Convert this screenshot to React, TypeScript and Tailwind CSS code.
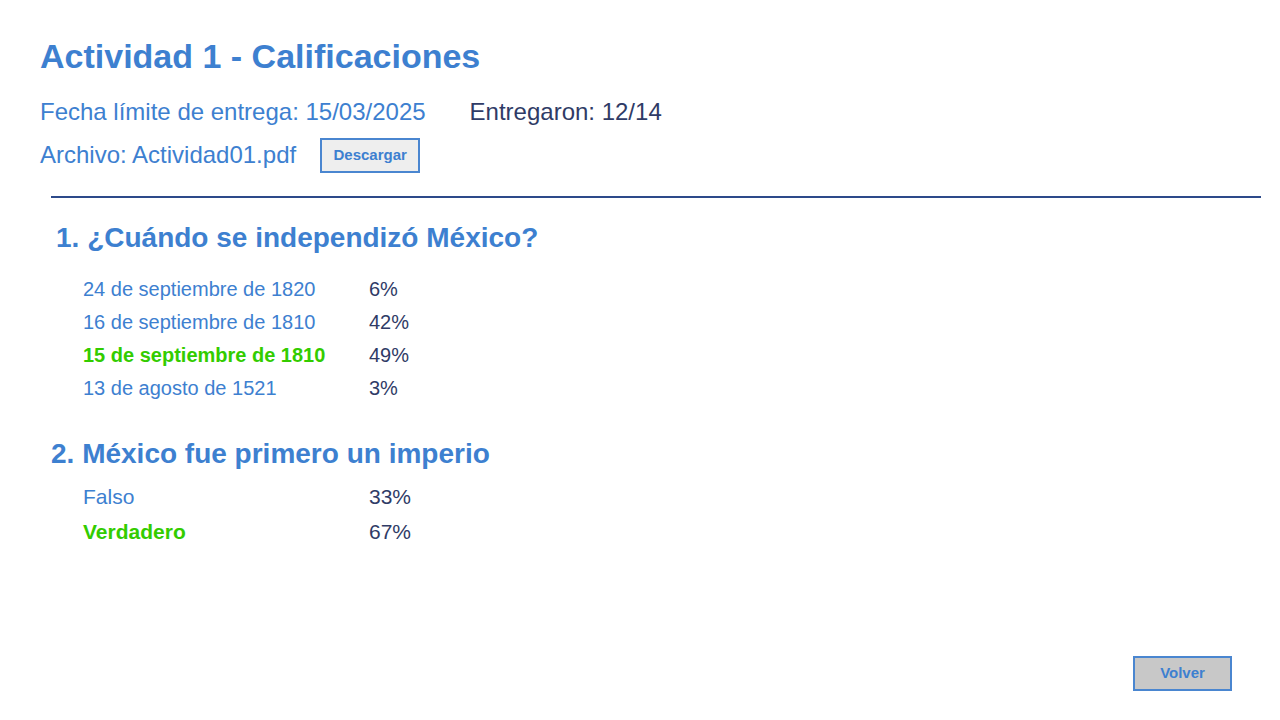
import React from 'react';

const blue = 'text-[#3d80d0]';

const q1 = [
  { label: '24 de septiembre de 1820', pct: '6%' },
  { label: '16 de septiembre de 1810', pct: '42%' },
  { label: '15 de septiembre de 1810', pct: '49%', correct: true },
  { label: '13 de agosto de 1521', pct: '3%' },
];

const q2 = [
  { label: 'Falso', pct: '33%' },
  { label: 'Verdadero', pct: '67%', correct: true },
];

const Option = ({ label, pct, correct, h }: { label: string; pct: string; correct?: boolean; h: string }) => (
  <div className={`flex items-center ${h}`}>
    <span className={`w-[286px] ${correct ? 'font-bold text-[#33cc00]' : blue}`}>{label}</span>
    <span className="text-[#2f3b66]">{pct}</span>
  </div>
);

const App = () => {
  return (
    <div className="flex h-screen w-full flex-col bg-white font-['Liberation_Sans',Arial,sans-serif]">
      {/* Header */}
      <div className="pl-10 pt-[36px]">
        <h1 className={`text-[34px] font-bold leading-[40px] ${blue}`}>Actividad 1 - Calificaciones</h1>
        <div className="mt-[20px] flex h-[32px] items-center text-[24px]">
          <span className={blue}>Fecha límite de entrega: 15/03/2025</span>
          <span className="ml-[44px] text-[#2f3b66]">Entregaron: 12/14</span>
        </div>
        <div className="mt-[9px] flex h-[36px] items-center">
          <span className={`text-[24px] ${blue}`}>Archivo: Actividad01.pdf</span>
          <button className="ml-6 h-[35px] w-[100px] border-2 border-[#4a86d0] bg-[#eeeeee] text-[15px] font-bold text-[#3d80d0]">
            Descargar
          </button>
        </div>
      </div>

      <div className="mt-[23px] ml-[51px] mr-[19px] border-t-2 border-[#2d4a8a]" />

      {/* Question 1 */}
      <h2 className={`mt-[23px] ml-[56px] text-[28px] font-bold leading-[34px] ${blue}`}>
        1. ¿Cuándo se independizó México?
      </h2>
      <div className="mt-[17px] ml-[83px] text-[20px]">
        {q1.map((o) => (
          <Option key={o.label} {...o} h="h-[33px]" />
        ))}
      </div>

      {/* Question 2 */}
      <h2 className={`mt-[33px] ml-[51px] text-[28px] font-bold leading-[34px] ${blue}`}>
        2. México fue primero un imperio
      </h2>
      <div className="mt-[8px] ml-[83px] text-[21px]">
        {q2.map((o) => (
          <Option key={o.label} {...o} h="h-[35px]" />
        ))}
      </div>

      {/* Footer */}
      <div className="mt-auto flex justify-end pb-[29px] pr-[48px]">
        <button className="h-[35px] w-[99px] border-2 border-[#4a86d0] bg-[#c8c8c8] text-[15px] font-bold text-[#3d80d0]">
          Volver
        </button>
      </div>
    </div>
  );
};

export default App;
